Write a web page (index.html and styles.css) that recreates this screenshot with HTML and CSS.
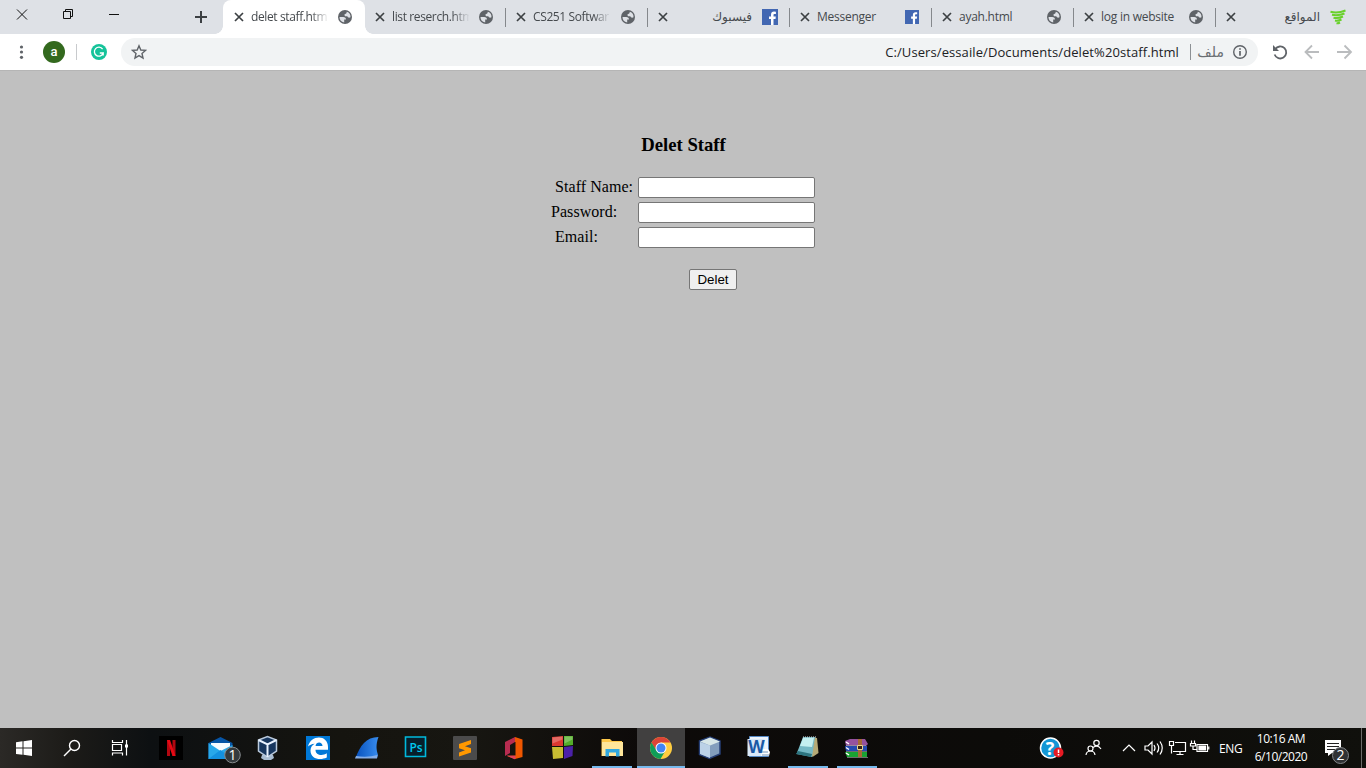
FILE: index.html
```html
<!DOCTYPE html>
<html lang="en">
<head>
<meta charset="utf-8">
<title>delet staff.html</title>
<link rel="stylesheet" href="styles.css">
</head>
<body>
<svg class="defs" width="0" height="0">
  <symbol id="close" viewBox="0 0 10 10"><path d="M1 1L9 9M9 1L1 9" stroke="#3c4043" stroke-width="1.7"/></symbol>
  <symbol id="globe" viewBox="0 0 14 14"><circle cx="7" cy="7" r="7" fill="#5f6368"/><path d="M1.500 7H5.200Q8 7 8 9.600H6.200V12.400A5.500 5.500 0 0 1 1.500 7ZM8.800 1.800A5.500 5.500 0 0 1 12.500 7.300Q10.200 8.300 9.200 6.300H7Q5.700 4.200 7.300 4Q8.800 3.800 8.800 1.800Z" fill="#dee1e6"/></symbol>
  <symbol id="facebook" viewBox="0 0 16 16"><path d="M0 0h16v16H0z" fill="#4267b2"/><path d="M9 16V10H7V7.500h2V5.700C9 3.700 10.200 2.600 12 2.600l1.900.1v2.200h-1.200c-1 0-1.200.5-1.200 1.200v1.400h2.300l-.3 2.500h-2v6z" fill="#fff"/></symbol>
</svg>

<header class="tabstrip">
  <div class="window-controls">
    <svg width="223" height="34" fill="none" stroke="#111"><path d="M17 9.500l10 10M27 9.500l-10 10M109 14.500h10"/><path d="M63.500 11.500h7v7h-7zM65.500 11.500v-2h7v7h-2"/><path d="M201 11v12M195 17h12" stroke="#3c4043" stroke-width="2"/></svg>
  </div>
  <div class="tab active"><svg class="x"><use href="#close"/></svg><span class="title fade">delet staff.htm</span><svg class="fav"><use href="#globe"/></svg></div>
  <div class="tab"><svg class="x"><use href="#close"/></svg><span class="title fade">list reserch.htm</span><svg class="fav"><use href="#globe"/></svg></div>
  <div class="tab"><svg class="x"><use href="#close"/></svg><span class="title fade">CS251 Softwar</span><svg class="fav"><use href="#globe"/></svg></div>
  <div class="tab"><svg class="x"><use href="#close"/></svg><span class="title arabic" dir="rtl">فيسبوك</span><svg class="fav big"><use href="#facebook"/></svg></div>
  <div class="tab"><svg class="x"><use href="#close"/></svg><span class="title">Messenger</span><svg class="fav"><use href="#facebook"/></svg></div>
  <div class="tab"><svg class="x"><use href="#close"/></svg><span class="title">ayah.html</span><svg class="fav"><use href="#globe"/></svg></div>
  <div class="tab"><svg class="x"><use href="#close"/></svg><span class="title">log in website</span><svg class="fav"><use href="#globe"/></svg></div>
  <div class="tab"><svg class="x"><use href="#close"/></svg><span class="title arabic" dir="rtl">المواقع</span><svg class="fav big" viewBox="0 0 16 16"><path d="M.5 2.800Q8 4.500 15.500 1.500M2 5.800Q8 7.100 14.500 4.500M3.500 8.700Q8 9.700 13 7.500M5 11.500Q8 12.200 11.500 10.500M6.500 14.300Q8 14.600 10 13.500" fill="none" stroke="#69d02c" stroke-width="2"/></svg></div>
</header>

<nav class="toolbar">
  <div class="tools">
    <svg width="121" height="36"><g fill="#5f6368"><circle cx="21.500" cy="13" r="1.600"/><circle cx="21.500" cy="18" r="1.600"/><circle cx="21.500" cy="23.300" r="1.600"/></g><circle cx="54" cy="18" r="11" fill="#33691e"/><path d="M76.500 10v16" stroke="#c8cacd"/><circle cx="99" cy="18" r="8" fill="#15c39a"/><path d="M102.600 15.100A4.500 4.500 0 1 0 103.200 19H99.800M103.200 18.200v3.200" fill="none" stroke="#fff" stroke-width="1.300"/><text x="54" y="22" class="avatar">a</text></svg>
  </div>
  <div class="omnibox">
    <svg class="star" width="16" height="16" viewBox="0 0 16 16"><path d="M8 1.800l1.800 4.200 4.700.4-3.500 3.100 1 4.500L8 11.600 4 14l1-4.500L1.500 6.400l4.700-.4z" fill="none" stroke="#5f6368" stroke-width="1.400"/></svg>
    <span class="url">C:/Users/essaile/Documents/delet%20staff.html</span>
    <span class="divider"></span>
    <span class="file arabic" dir="rtl">ملف</span>
    <svg class="info" width="16" height="16" viewBox="0 0 16 16"><circle cx="8" cy="8" r="6.300" fill="none" stroke="#5f6368" stroke-width="1.400"/><path d="M8 4.200v1.600M8 7v4.700" stroke="#5f6368" stroke-width="1.700"/></svg>
  </div>
  <svg class="nav-icons" width="108" height="36" fill="none" stroke-width="1.800"><path d="M17.200 15.200A6 6 0 1 1 16.600 20.500" stroke="#5f6368"/><path d="M15 11v6h6z" fill="#5f6368"/><path d="M61 18H48M54 11.500L47.500 18l6.500 6.500M79 18h13M86.500 11.500L93 18l-6.500 6.500" stroke="#babcbe"/></svg>
</nav>

<main class="page">
  <h3>Delet Staff</h3>
  <form class="form">
    <label for="n">&nbsp;Staff Name:</label><input id="n" type="text">
    <label for="p">Password:</label><input id="p" type="password">
    <label for="e">&nbsp;Email:</label><input id="e" type="text">
    <button type="button">Delet</button>
  </form>
</main>

<footer class="taskbar">
  <div class="system">
    <svg viewBox="0 0 48 40"><path d="M16 14.200l6.500-.9v6.200H16zM23.500 13.200L32 12v7.500h-8.500zM16 20.500h6.500v6.300l-6.500-.9zM23.500 20.500H32V28l-8.500-1.200z" fill="#fff"/></svg>
    <svg viewBox="0 0 48 40" fill="none" stroke="#fff" stroke-width="1.400"><circle cx="26.500" cy="17.500" r="5"/><path d="M23 21l-7 7"/></svg>
    <svg viewBox="0 0 48 40" fill="none" stroke="#fff" stroke-width="1.200"><path d="M16.500 12v2.500h10V12M16.500 27.500V25h10v2.500M16.500 16.500h9v6h-9zM30.500 12v15.500"/><path d="M29 16.500h3v3h-3z" fill="#fff" stroke="none"/></svg>
  </div>
  <div class="apps">
    <svg viewBox="0 0 49 40"><path d="M12 8h24v24H12z" fill="#000"/><path d="M20 12h3v16h-3zM25.500 12h3v16h-3z" fill="#b20710"/><path d="M20 12h3l5.500 16h-3z" fill="#e50914"/></svg>
    <svg viewBox="0 0 49 40"><path d="M12.500 15l12-6 12 6v16h-24z" fill="#0755a6"/><path d="M15 15h19v7l-9.500 4-9.500-4z" fill="#f7fbff"/><path d="M12.500 15l12 8 12-6v14h-24z" fill="#28a8ea"/><path d="M12.500 31l12-9 12 9z" fill="#1491df"/><circle cx="36.500" cy="27" r="7.800" fill="#343a3d" stroke="#858a8d"/><text x="36.500" y="31.500" class="badge">1</text></svg>
    <svg viewBox="0 0 49 40"><path d="M17 27h11l1 3-3 2h-7l-3-2z" fill="#a9bdd2"/><path d="M13.500 12L22.500 8.500l9 3.500v11l-9 6-9-6z" fill="#17365e" stroke="#b9c9dc" stroke-width="1.500"/><path d="M13.500 12l9 4.500 9-4.500M22.500 16.500V29" fill="none" stroke="#e8f2ff" stroke-width="2"/></svg>
    <svg viewBox="0 0 49 40"><path d="M12 8h24v24H12z" fill="#0078d7"/><path d="M14 18.500C16.500 6.500 34 6 34 19v2.700H21.500c0 6 7.300 6.300 11.300 3.600v4.300C25.500 33 16.500 30.600 16.500 22.500c0-3 1.500-5.300 4.200-6.800-3 .3-5.200 1.200-6.700 2.800zM21.500 18h7c0-4.500-6.500-4.800-7 0z" fill="#fff"/></svg>
    <svg viewBox="0 0 49 40"><defs><linearGradient id="fin"><stop stop-color="#0751bd"/><stop offset="1" stop-color="#388ced"/></linearGradient></defs><path d="M12.500 30C17 18 23 9 35.500 9c-3 8-2 13-.5 18l-1 3z" fill="url(#fin)"/><path d="M13 28q11 2 21.500-1l-.5 3.500H12z" fill="#85aee8"/></svg>
    <svg viewBox="0 0 49 40"><path d="M13.500 9h20v19.500h-20z" fill="#071e2a" stroke="#00b9dc" stroke-width="1.600"/><text x="24" y="23.500" class="ps">Ps</text></svg>
    <svg viewBox="0 0 49 40"><rect x="12" y="8" width="24" height="24" rx="1" fill="#4b4b4b"/><path d="M18 16l12-4v4l-6 2.200 6 2v4.300l-12 4v-4l6-2.300-6-2z" fill="#ff9800"/></svg>
    <svg viewBox="0 0 49 40"><path d="M15 14l10-5v5l-5 3v8l-5 3z" fill="#b72c50"/><path d="M25 9l7.500 2.500V29L25 31l-8-3 8.500-.5V14H25z" fill="#ef5700"/><path d="M16.500 27.500l9 .2V31l-1 .2z" fill="#e14258"/></svg>
    <svg viewBox="0 0 49 40"><path d="M13 9l11-1v10H13z" fill="#da3830"/><path d="M25 8h9v9l-9 1z" fill="#53ad29"/><path d="M13 19h11v11l-10 1z" fill="#c7bc32"/><path d="M25 19l9-1-.5 10-8.500 3z" fill="#4b21a8"/><path d="M13.500 9.500l10-1v3l-10 4zM25.500 8.500h8v3l-8 4z" fill="#ffffff40"/></svg>
    <svg viewBox="0 0 49 40"><path d="M13.500 11h8.500l2 2h10v15H13.500z" fill="#ffc94a"/><path d="M14 14h21v14H14z" fill="#ffe69a"/><path d="M17.500 28.500V21h14v7.500H28v-4h-7v4z" fill="#31a8df"/><path class="underline" d="M4 38h40v2H4z"/></svg>
    <svg viewBox="0 0 49 40" class="current"><circle cx="24" cy="20" r="11" fill="#ffcd40"/><path d="M14.500 14.500A11 11 0 0 1 33.500 14.500H24l-5 8z" fill="#db4437"/><path d="M14.500 14.500A11 11 0 0 0 23.500 31l5-8.500h-9z" fill="#0f9d58"/><circle cx="24" cy="20" r="5.500" fill="#fff"/><circle cx="24" cy="20" r="4.500" fill="#4285f4"/><path class="underline" d="M0 38h48v2H0z"/></svg>
    <svg viewBox="0 0 49 40"><path d="M13.500 13L24 9l10 4v13L23.500 30.500l-10-4z" fill="#839ebd" stroke="#263f76" stroke-width="1.500"/><path d="M14 13.500l10-4 10 4-10 4z" fill="#d8e7e8"/><path d="M14 14l10 3.500V30l-10-4z" fill="#bcd2e7"/></svg>
    <svg viewBox="0 0 49 40"><path d="M14.500 8.500h19v20h-19z" fill="#edf4fc" stroke="#5689c5"/><path d="M12.500 11h17v17h-17z" fill="#d9e8f8"/><path d="M28 21h5l2 3-1 4h-8z" fill="#fff"/><path d="M26 24h7M27 27h7" stroke="#7095ba"/><text x="21.500" y="24.500" class="word">W</text></svg>
    <svg viewBox="0 0 49 40"><path d="M20 9l13 1 1.500 15-6 4z" fill="#b6aa76"/><path d="M19 9h12l-3 20-15.500-3z" fill="#75b9c5"/><path d="M19 10h11l-2 9-12-1z" fill="#c4eff0"/><path d="M12 26l15 3 1-3-14-3z" fill="#2d747f"/><path d="M19 9h13" stroke="#ddd" stroke-dasharray="1 1"/><path class="underline" d="M4 38h40v2H4z"/></svg>
    <svg viewBox="0 0 49 40"><path d="M12 13l5-2h15l3 5-2 2H13z" fill="#95529e"/><path d="M12 18h22v5H13z" fill="#244ab0"/><path d="M12 24h22v5H14z" fill="#19a332"/><path d="M13 17.500h20M13 23.500h21M14 29.500h21" stroke="#999" stroke-width=".7"/><path d="M25 11h4v18h-4z" fill="#a66a38"/><path d="M24.500 17.500h5v4h-5z" fill="#332018" stroke="#ead38c"/><path d="M13 14l3 2M13 19.500l3 2M13 25l3 2" stroke="#fff" stroke-width="1.500"/><path class="underline" d="M4 38h40v2H4z"/></svg>
  </div>
  <div class="tray">
    <svg class="tray-icons" width="182" height="40" fill="none" stroke="#fff" stroke-width="1.200"><circle cx="20.500" cy="20" r="10" fill="#1397d5" stroke-width="1.500"/><text x="20" y="26.500" class="help">?</text><circle cx="28.500" cy="24.500" r="5" fill="#e61a23" stroke="none"/><path d="M28.500 21.500v3.500M28.500 26v1.500" stroke-width="1.500"/><circle cx="66.500" cy="15" r="2.700"/><path d="M63 19.500q4.500-3.500 8 1.500"/><circle cx="60.500" cy="20.500" r="2.500"/><path d="M56 27q.5-4 4.500-4t4.500 4M93 23l6-6 6 6M115 18h3l4-4v12l-4-4h-3zM124 17q2 3 0 6M127 15.500q3.500 4.500 0 9M130 13.500q4.500 6.500 0 13"/><path d="M145 14.500h10.500v9H143M139.500 13.500h4v4h-4zM141.500 17.500v8M146.500 26.500h7M150 23.500v3"/><path d="M167 16.500h10.500v7H167zM178.800 18.500v3M164.500 12.500v3M161.500 12.500v3M160.500 15.500h5v2.500h-5zM163 18v3.500h4"/><path d="M169 18h6.500v4H169z" fill="#fff"/></svg>
    <span class="lang">ENG</span>
    <div class="clock"><span class="time">10:16 AM</span><span>6/10/2020</span></div>
    <svg class="notify" width="58" height="40"><path d="M17 12h16v13h-9l-4 3v-3h-3z" fill="#fff"/><path d="M19 15.500h12M19 18.500h12M19 21.500h8" stroke="#222"/><circle cx="32.500" cy="27.500" r="8" fill="#303234" stroke="#84878a"/><text x="32.500" y="32" class="badge">2</text><path d="M53.500 0v40" stroke="#6b6b69"/></svg>
  </div>
</footer>
</body>
</html>
```
FILE: styles.css
```css
* { box-sizing: border-box; }
body {
  margin: 0;
  width: 1366px;
  height: 768px;
  display: flex;
  flex-direction: column;
  overflow: hidden;
  background: #c0c0c0;
  font-family: "Open Sans", "Noto Sans", "DejaVu Sans", sans-serif;
}
.defs { position: absolute; }
svg { display: block; flex: none; }
.tabstrip { display: flex; height: 34px; background: #dee1e6; flex: none; }
.window-controls { width: 223px; flex: none; }
.tab {
  display: flex;
  align-items: center;
  width: 142px;
  flex: none;
  padding-left: 9px;
  color: #45494d;
  background: linear-gradient(#85888c, #85888c) right 1px top 8px / 1px 19px no-repeat;
}
.tab:nth-child(3) { padding-left: 10px; }
.tab:last-child { background: none; }
.tab.active {
  position: relative;
  padding-left: 11px;
  background: #fff;
  border-radius: 8px 8px 0 0;
}
.tab.active::before, .tab.active::after {
  content: "";
  position: absolute;
  bottom: 0;
  width: 8px;
  height: 8px;
}
.tab.active::before { left: -8px; background: radial-gradient(circle at 0 0, #dee1e6 7.5px, #fff 8px); }
.tab.active::after { right: -8px; background: radial-gradient(circle at 100% 0, #dee1e6 7.5px, #fff 8px); }
.x { width: 10px; height: 10px; }
.title { width: 77px; margin-left: 7px; font-size: 12px; line-height: 20px; letter-spacing: -.25px; white-space: nowrap; flex: none; }
.fade { letter-spacing: -.38px; -webkit-mask-image: linear-gradient(90deg, #000 78%, transparent 101%); mask-image: linear-gradient(90deg, #000 78%, transparent 101%); }
.arabic { font-family: "DejaVu Sans", sans-serif; letter-spacing: 0; }
.fav { width: 14px; height: 14px; margin-left: 10px; }
.tab:nth-child(n+4) .fav { margin-left: 11px; }
.tab:nth-child(n+4) .fav.big { width: 16px; height: 16px; margin-left: 10px; }
.toolbar { height: 37px; display: flex; background: #fff; border-bottom: 1px solid #b5b5b5; flex: none; }
.tools { width: 121px; flex: none; }
.avatar { font: 500 13px Roboto, sans-serif; fill: #fff; text-anchor: middle; }
.omnibox { display: flex; align-items: center; width: 1137px; height: 28px; margin-top: 4px; padding: 0 10px; border-radius: 14px; background: #f1f3f4; flex: none; }
.url { margin-left: auto; font-size: 13px; letter-spacing: .09px; color: #202124; white-space: nowrap; }
.divider { width: 1px; height: 16px; margin-left: 11px; background: #8c9094; }
.file { width: 27px; margin: 0 8px 0 6px; font-size: 14px; color: #6b6f73; white-space: nowrap; }
.page { flex: 1; font-family: "Liberation Serif", serif; font-size: 16px; color: #000; padding-top: 63px; }
.page h3 { margin: 0 0 21px 1px; font-size: 18.72px; line-height: 22px; text-align: center; }
.form { display: grid; grid-template-columns: 87px 177px; row-gap: 4px; width: 264px; margin: 0 auto; }
.form label { line-height: 20px; height: 21px; white-space: nowrap; letter-spacing: .05px; }
.form input { width: 177px; height: 21px; margin: 0; padding: 1px 2px; border: 1px solid #767676; border-radius: 2px; background: #fff; }
.form button { grid-column: 1 / -1; margin: 17px 0 0 138px; width: 48px; height: 21px; padding: 0; border: 1px solid #767676; border-radius: 2px; background: #efefef; color: #000; font: 13.333px "Liberation Sans", sans-serif; }
.taskbar { display: flex; height: 40px; flex: none; color: #fff; background: linear-gradient(90deg, #2b2926 0, #1c1b18 70px, #0d1012 150px, #15140f 340px, #171611 470px, #0d0a09 640px, #0c0b09 1000px, #10100c 1366px); }
.system { display: flex; width: 147px; flex: none; }
.system svg { width: 48px; height: 40px; }
.apps { display: flex; flex: none; }
.apps svg { width: 49px; height: 40px; }
.apps .current { background: linear-gradient(90deg, #414040 48px, transparent 48px); }
.underline { fill: #76b9ed; }
.badge { font: 14px "Open Sans", sans-serif; fill: #fff; stroke: none; text-anchor: middle; }
.ps { font: 600 12px "Open Sans", sans-serif; fill: #00c8ee; text-anchor: middle; }
.word { font: bold 17px "Open Sans", sans-serif; fill: #1a59a5; text-anchor: middle; }
.help { font: bold 18px "Open Sans", sans-serif; fill: #fff; stroke: none; text-anchor: middle; }
.tray { display: flex; align-items: center; margin-left: auto; width: 346px; }
.lang { width: 25px; flex: none; margin-left: 17px; font-size: 12px; letter-spacing: -.4px; }
.tray-icons { margin-left: 10px; margin-right: -10px; }
.clock { display: flex; flex: none; flex-direction: column; width: 74px; margin-right: -10px; font-size: 12px; line-height: 18px; letter-spacing: -.48px; text-align: center; white-space: nowrap; }
```
